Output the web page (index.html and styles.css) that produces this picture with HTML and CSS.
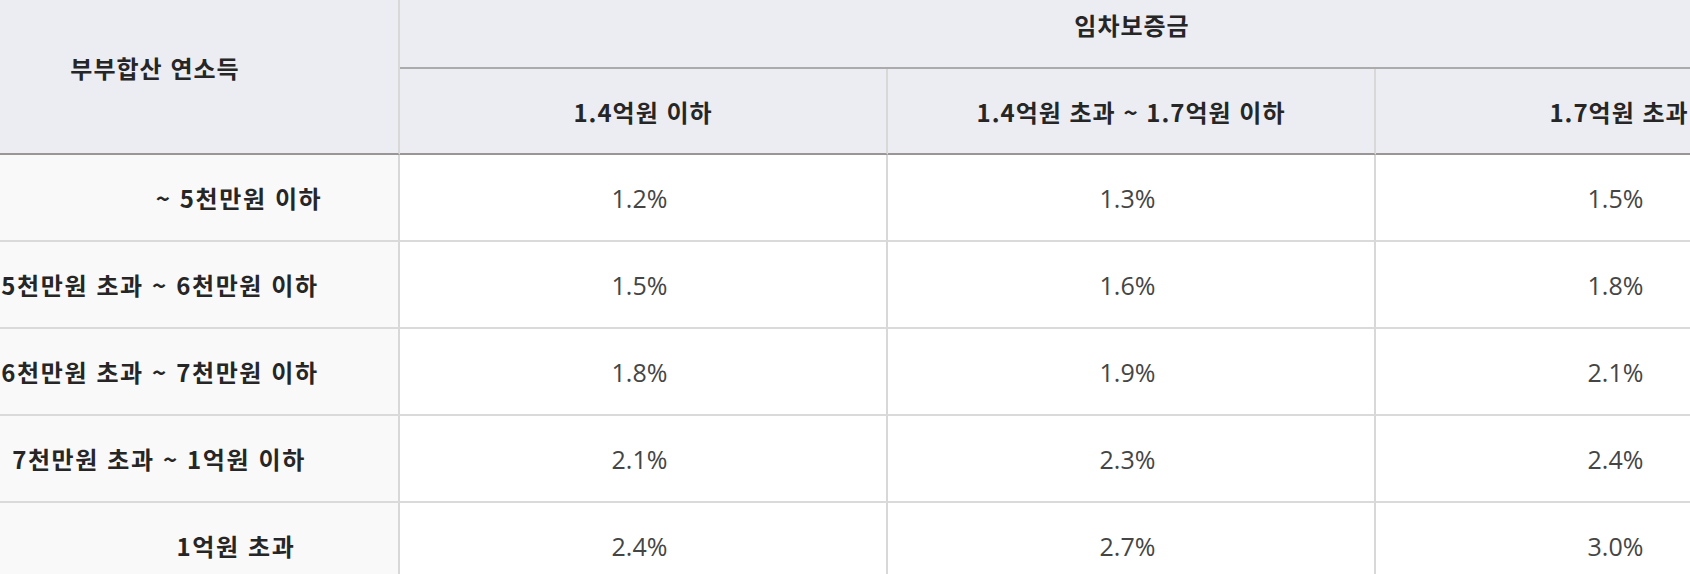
FILE: index.html
```html
<!DOCTYPE html>
<html lang="ko">
<head>
<meta charset="utf-8">
<title>임차보증금 금리표</title>
<link rel="stylesheet" href="styles.css">
</head>
<body>
<div class="viewport">
  <div class="sheet">
    <div class="cell head corner">부부합산 연소득</div>
    <div class="cell head group">임차보증금</div>
    <div class="cell head sub">1.4억원 이하</div>
    <div class="cell head sub">1.4억원 초과 ~ 1.7억원 이하</div>
    <div class="cell head sub">1.7억원 초과</div>

    <div class="cell label shift-lg">~ 5천만원 이하</div>
    <div class="cell data">1.2%</div>
    <div class="cell data">1.3%</div>
    <div class="cell data">1.5%</div>

    <div class="cell label shift-sm">5천만원 초과 ~ 6천만원 이하</div>
    <div class="cell data">1.5%</div>
    <div class="cell data">1.6%</div>
    <div class="cell data">1.8%</div>

    <div class="cell label shift-sm">6천만원 초과 ~ 7천만원 이하</div>
    <div class="cell data">1.8%</div>
    <div class="cell data">1.9%</div>
    <div class="cell data">2.1%</div>

    <div class="cell label shift-xs">7천만원 초과 ~ 1억원 이하</div>
    <div class="cell data">2.1%</div>
    <div class="cell data">2.3%</div>
    <div class="cell data">2.4%</div>

    <div class="cell label shift-lg2">1억원 초과</div>
    <div class="cell data">2.4%</div>
    <div class="cell data">2.7%</div>
    <div class="cell data">3.0%</div>
  </div>
</div>
</body>
</html>
```
FILE: styles.css
```css
html, body {
  margin: 0;
  padding: 0;
  background: #ffffff;
}

.viewport {
  width: 1690px;
  height: 574px;
  overflow: hidden;
}

.sheet {
  display: grid;
  grid-template-columns: repeat(4, 488px);
  grid-template-rows: 87px 86px repeat(5, 87px);
  margin: -18px 0 0 -88px;
  font-family: "Noto Sans CJK KR", "Noto Sans", sans-serif;
  font-size: 24px;
}

.cell {
  box-sizing: border-box;
  display: flex;
  align-items: center;
  justify-content: center;
  border-right: 2px solid #d8d8d8;
  border-bottom: 2px solid #dadada;
  white-space: nowrap;
}

.head {
  background: #ecedf2;
  color: #262626;
  font-weight: 700;
  letter-spacing: 1px;
}

.corner {
  grid-row: 1 / span 2;
  border-bottom-color: #9a9695;
}

.group {
  grid-column: 2 / span 3;
  border-bottom-color: #ababab;
  border-right: none;
}

.sub {
  border-bottom-color: #9a9695;
}

.label {
  background: #f9f9f9;
  color: #262626;
  font-weight: 700;
  letter-spacing: 1.6px;
}

.data {
  background: #ffffff;
  color: #454545;
  font-weight: 400;
  font-family: "Open Sans", "Noto Sans", sans-serif;
  font-size: 25px;
  padding-right: 7px;
}

.shift-lg { padding-left: 168px; }
.shift-lg2 { padding-left: 162px; }
.shift-sm { padding-left: 10px; }
.shift-xs { padding-left: 8px; }
```
